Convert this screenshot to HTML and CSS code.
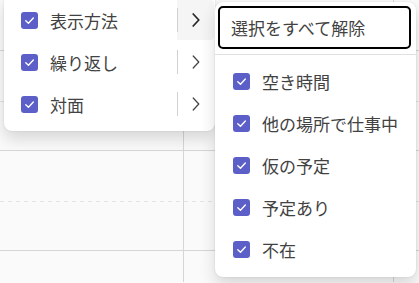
FILE: index.html
```html
<!DOCTYPE html>
<html lang="ja">
<head>
    <meta charset="UTF-8">
    <title>表示オプション</title>
    <link rel="stylesheet" href="styles.css">
</head>
<body>
    <div class="calendar">
        <div class="cal-row first"><div class="cell c1"></div><div class="cell c2"></div><div class="cell c3"></div></div>
        <div class="cal-row"><div class="cell c1"></div><div class="cell c2"></div><div class="cell c3"></div></div>
        <div class="cal-row"><div class="cell c1"></div><div class="cell c2"></div><div class="cell c3"></div></div>
        <div class="cal-row last"><div class="cell c1"></div><div class="cell c2"></div><div class="cell c3"></div></div>
    </div>

    <div class="menu menu-main">
        <div class="item">
            <span class="check"><svg viewBox="0 0 16 16"><path d="M4.5 8.3 L7 10.6 L11.6 5.6"/></svg></span>
            <span class="label">表示方法</span>
            <span class="sub active"><svg viewBox="0 0 8 14"><path d="M1.2 1 L6.8 7 L1.2 13"/></svg></span>
        </div>
        <div class="item">
            <span class="check"><svg viewBox="0 0 16 16"><path d="M4.5 8.3 L7 10.6 L11.6 5.6"/></svg></span>
            <span class="label">繰り返し</span>
            <span class="sub"><svg viewBox="0 0 8 14"><path d="M1.2 1 L6.8 7 L1.2 13"/></svg></span>
        </div>
        <div class="item">
            <span class="check"><svg viewBox="0 0 16 16"><path d="M4.5 8.3 L7 10.6 L11.6 5.6"/></svg></span>
            <span class="label">対面</span>
            <span class="sub"><svg viewBox="0 0 8 14"><path d="M1.2 1 L6.8 7 L1.2 13"/></svg></span>
        </div>
    </div>

    <div class="menu menu-sub">
        <button class="clear">選択をすべて解除</button>
        <div class="divider"></div>
        <div class="item">
            <span class="check"><svg viewBox="0 0 16 16"><path d="M4.5 8.3 L7 10.6 L11.6 5.6"/></svg></span>
            <span class="label">空き時間</span>
        </div>
        <div class="item">
            <span class="check"><svg viewBox="0 0 16 16"><path d="M4.5 8.3 L7 10.6 L11.6 5.6"/></svg></span>
            <span class="label">他の場所で仕事中</span>
        </div>
        <div class="item">
            <span class="check"><svg viewBox="0 0 16 16"><path d="M4.5 8.3 L7 10.6 L11.6 5.6"/></svg></span>
            <span class="label">仮の予定</span>
        </div>
        <div class="item">
            <span class="check"><svg viewBox="0 0 16 16"><path d="M4.5 8.3 L7 10.6 L11.6 5.6"/></svg></span>
            <span class="label">予定あり</span>
        </div>
        <div class="item">
            <span class="check"><svg viewBox="0 0 16 16"><path d="M4.5 8.3 L7 10.6 L11.6 5.6"/></svg></span>
            <span class="label">不在</span>
        </div>
    </div>
</body>
</html>
```

FILE: styles.css
```css
body {
    margin: 0;
    width: 419px;
    height: 283px;
    overflow: hidden;
    position: relative;
    background: #fafafa;
    font-family: "Noto Sans CJK JP", "Noto Sans", sans-serif;
    color: #424242;
}
.calendar {
    display: flex;
    flex-direction: column;
    height: 283px;
    overflow: hidden;
}
.cal-row {
    display: flex;
    flex-shrink: 0;
    height: 99px;
    border-bottom: 1px solid #d6d6d6;
    background-image: linear-gradient(to right, #e4e4e4 50%, transparent 50%);
    background-size: 8px 1px;
    background-repeat: repeat-x;
    background-position: 0 50px;
}
.cal-row.first {
    height: 50px;
    background: none;
}
.cal-row.last {
    height: 31px;
    border-bottom: none;
    background: none;
}
.cell {
    height: 100%;
}
.c1 {
    width: 183px;
    border-right: 1px solid #d6d6d6;
}
.c2 {
    width: 209px;
    border-right: 1px solid #d6d6d6;
}
.c3 {
    flex: 1;
}

.menu {
    position: absolute;
    background: #fff;
    border-radius: 8px;
    box-shadow: 0 8px 16px rgba(0, 0, 0, 0.14), 0 0 2px rgba(0, 0, 0, 0.12);
    box-sizing: border-box;
}
.menu-main {
    left: 4px;
    top: -6px;
    width: 211px;
    height: 137px;
    padding-top: 5px;
}
.menu-sub {
    left: 215px;
    top: 2px;
    width: 201px;
    height: 275px;
    padding: 4px 5px 0 3px;
}
.item {
    display: flex;
    align-items: center;
    height: 42px;
    font-size: 17px;
}
.menu-main .item {
    padding-left: 17px;
}
.menu-sub .item {
    padding-left: 15px;
}
.check {
    width: 17px;
    height: 17px;
    border-radius: 3px;
    background: #5b5fc7;
    display: flex;
    margin-right: 12px;
}
.check svg {
    width: 17px;
    height: 17px;
    fill: none;
    stroke: #fff;
    stroke-width: 1.3;
    stroke-linecap: round;
    stroke-linejoin: round;
}
.label {
    flex: 1;
    white-space: nowrap;
}
.sub {
    position: relative;
    width: 37px;
    height: 40px;
    margin-right: 1px;
    display: flex;
    align-items: center;
    justify-content: center;
    border-radius: 4px;
}
.sub::before {
    content: "";
    position: absolute;
    left: 0;
    top: 8px;
    height: 24px;
    border-left: 1px solid #d1d1d1;
}
.sub svg {
    width: 8px;
    height: 14px;
    fill: none;
    stroke: #424242;
    stroke-width: 1.2;
    stroke-linecap: round;
    stroke-linejoin: round;
}
.sub.active {
    background: #f5f5f5;
    border-radius: 0 4px 4px 0;
}
.sub.active svg {
    stroke: #242424;
    stroke-width: 1.7;
}
.clear {
    display: block;
    width: 100%;
    height: 43px;
    border: 2px solid #000;
    border-radius: 5px;
    background: #fff;
    font-family: inherit;
    font-size: 17px;
    color: #424242;
    text-align: left;
    padding: 0 0 0 11px;
}
.divider {
    height: 1px;
    background: #e0e0e0;
    margin: 5px -5px 5px -3px;
}
```
